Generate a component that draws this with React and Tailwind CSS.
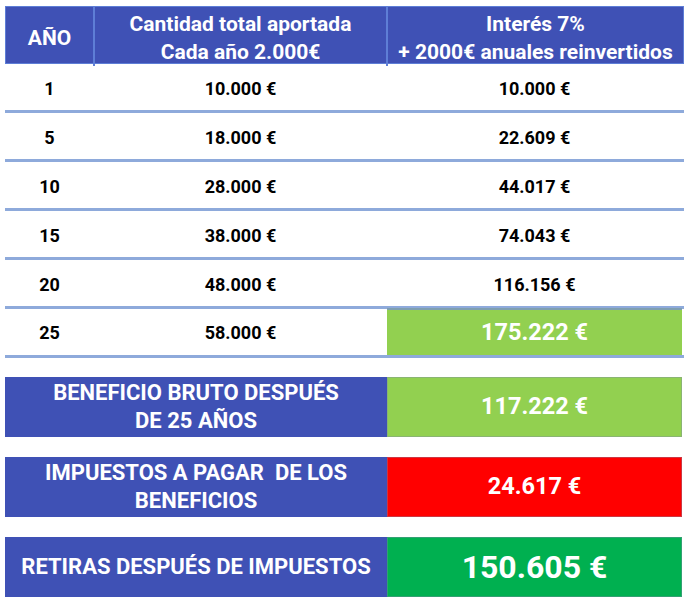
const rows = [
  ["1", "10.000 €", "10.000 €"],
  ["5", "18.000 €", "22.609 €"],
  ["10", "28.000 €", "44.017 €"],
  ["15", "38.000 €", "74.043 €"],
  ["20", "48.000 €", "116.156 €"],
];

function SummaryBox({ label, value, valueBg, valueSize }) {
  return (
    <div className="grid grid-cols-[382px_295px] h-[60px]">
      <div className="bg-[#3f51b5] flex items-center justify-center text-center text-white font-bold text-[22px] leading-[28px] px-2">
        {label}
      </div>
      <div
        className={`${valueBg} flex items-center justify-center text-white font-bold ${valueSize} border border-[#7f8aa8]/40`}
      >
        {value}
      </div>
    </div>
  );
}

export default function App() {
  return (
    <div
      className="w-[689px] h-[604px] bg-white px-[5px] pt-[6px]"
      style={{ fontFamily: "Roboto, 'Liberation Sans', sans-serif" }}
    >
      {/* header */}
      <div className="grid grid-cols-[89px_293px_295px] h-[58px] bg-[#3f51b5] border border-[#5e7ed6] text-white font-bold text-[21px] leading-[28px]">
        <div className="flex items-center justify-center border-r-2 border-[#5e7ed6] pt-[3px]">AÑO</div>
        <div className="flex flex-col items-center justify-center border-r-2 border-[#5e7ed6] pt-[3px]">
          <span>Cantidad total aportada</span>
          <span>Cada año 2.000€</span>
        </div>
        <div className="flex flex-col items-center justify-center pt-[3px]">
          <span>Interés 7%</span>
          <span>+ 2000€ anuales reinvertidos</span>
        </div>
      </div>

      {rows.map((r) => (
        <div
          key={r[0]}
          className="grid grid-cols-[89px_293px_295px] h-[49px] border-b-[3px] border-[#8eaadb] text-black font-bold text-[18px] pt-[2px]"
        >
          <div className="flex items-center justify-center">{r[0]}</div>
          <div className="flex items-center justify-center">{r[1]}</div>
          <div className="flex items-center justify-center">{r[2]}</div>
        </div>
      ))}

      <div className="grid grid-cols-[89px_293px_295px] h-[49px] border-b-[3px] border-[#8eaadb] text-black font-bold text-[18px]">
        <div className="flex items-center justify-center">25</div>
        <div className="flex items-center justify-center">58.000 €</div>
        <div className="flex items-center justify-center bg-[#92d050] text-white text-[23.5px] border-t-2 border-[#7f9fb0] mt-[-1px]">
          175.222 €
        </div>
      </div>

      <div className="flex flex-col gap-[20px] mt-[19px]">
        <SummaryBox
          label={<>BENEFICIO BRUTO DESPUÉS<br />DE 25 AÑOS</>}
          value="117.222 €"
          valueBg="bg-[#92d050]"
          valueSize="text-[23.5px]"
        />
        <SummaryBox
          label={<>IMPUESTOS A PAGAR&nbsp; DE LOS<br />BENEFICIOS</>}
          value="24.617 €"
          valueBg="bg-[#ff0000]"
          valueSize="text-[23.5px]"
        />
        <SummaryBox
          label="RETIRAS DESPUÉS DE IMPUESTOS"
          value="150.605 €"
          valueBg="bg-[#00b050]"
          valueSize="text-[32px]"
        />
      </div>
    </div>
  );
}
